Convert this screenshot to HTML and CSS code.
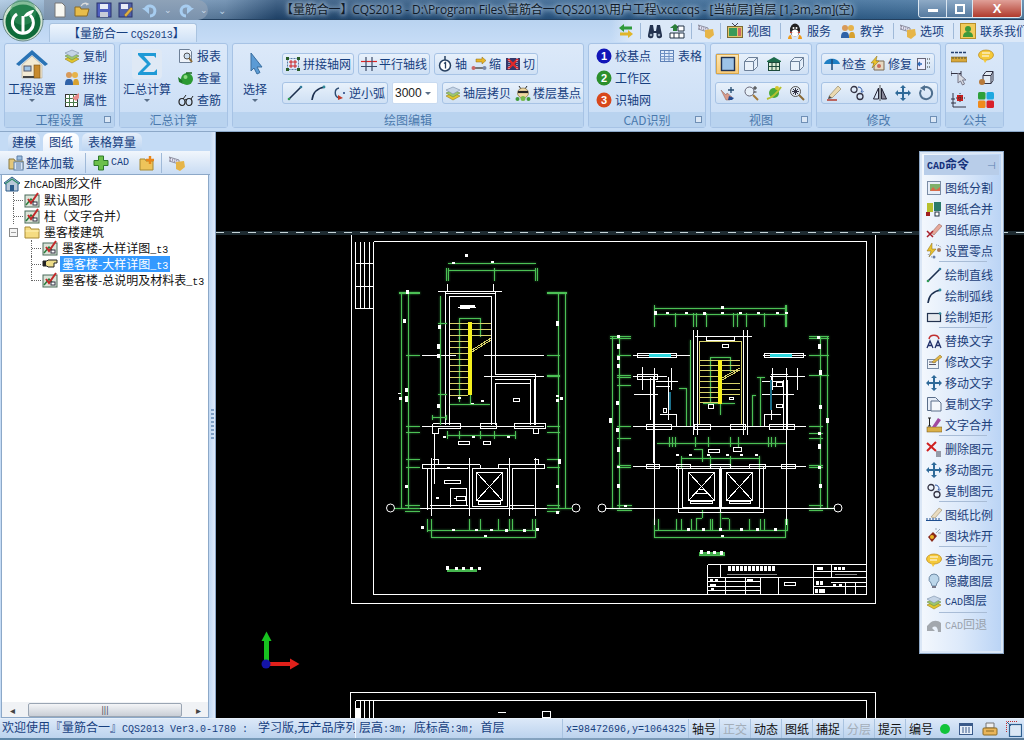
FILE: index.html
```html
<!DOCTYPE html>
<html lang="zh-CN">
<head>
    <meta charset="UTF-8">
    <title>量筋合一 CQS2013</title>
    <link rel="stylesheet" href="styles.css">
</head>
<body>
<svg class="defs" xmlns="http://www.w3.org/2000/svg">
    <symbol id="layers" viewBox="0 0 16 16"><path d="M1 11l7-3 7 3-7 4z" fill="#e3c62e" stroke="#97801a" stroke-width=".6"/><path d="M1 8l7-3 7 3-7 4z" fill="#9fc76a" stroke="#6b8a45" stroke-width=".6"/><path d="M1 5l7-3 7 3-7 4z" fill="#c5d4e6" stroke="#7a8ea8" stroke-width=".6"/></symbol>
    <symbol id="people" viewBox="0 0 16 16"><circle cx="5" cy="5" r="3" fill="#d89a5a"/><circle cx="11" cy="5" r="3" fill="#e6b34a"/><path d="M9 15c0-5 1-6 3-6s3 1 3 6z" fill="#d7a12f"/><path d="M1 15c0-5 1-6 4-6s4 1 4 6z" fill="#2f62a8"/></symbol>
    <symbol id="props" viewBox="0 0 16 16"><rect x="1.500" y="2.500" width="12" height="12" fill="#fff" stroke="#333"/><path d="M1 6.500h13M1 10.500h13M5.500 2v13M9.500 2v13" stroke="#4a7a4a"/><path d="M8 6l7-5 0 5-3 3z" fill="#e88a8a"/></symbol>
    <symbol id="report" viewBox="0 0 16 16"><path d="M1.500 1.500h10l2 2v11h-12z" fill="#eef3fa" stroke="#6d7f96"/><circle cx="9" cy="8" r="3" fill="#cfe0f0" stroke="#555"/><path d="M11 10l3 4" stroke="#8a6a35" stroke-width="2"/></symbol>
    <symbol id="teapot" viewBox="0 0 16 16"><circle cx="9" cy="9" r="6" fill="#2c9a33"/><circle cx="7.500" cy="7" r="2" fill="#8edb83"/><path d="M4 10L0 7l1 5 4 2z" fill="#1c7a26"/><path d="M8 3h6" stroke="#1c6a22" stroke-width="1.500"/></symbol>
    <symbol id="glasses" viewBox="0 0 16 16"><ellipse cx="4" cy="10" rx="3" ry="3.500" fill="none" stroke="#222" stroke-width="1.200"/><ellipse cx="11" cy="10" rx="3" ry="3.500" fill="none" stroke="#222" stroke-width="1.200"/><path d="M7 8c1-1 1-1 1.500 0M13 7l2-3M5 7l3-4" stroke="#222" fill="none"/></symbol>
    <symbol id="net" viewBox="0 0 16 16"><rect x="2.500" y="2.500" width="11" height="11" fill="none" stroke="#5a7fa8" stroke-dasharray="2 1"/><path d="M6 4v8M10 4v8M4 6h8M4 10h8" stroke="#c22" stroke-width="1"/><path d="M1 1h3v3H1zM12 1h3v3h-3zM1 12h3v3H1zM12 12h3v3h-3z" fill="#2a5d2a"/></symbol>
    <symbol id="parallel" viewBox="0 0 16 16"><path d="M0 5.500h16" stroke="#d22" stroke-width="1.200"/><path d="M0 10.500h16M5 1v14M11 1v14" stroke="#3a4a66" stroke-width="1.200"/></symbol>
    <symbol id="axis1" viewBox="0 0 16 16"><circle cx="8" cy="9.500" r="5.500" fill="#fff" stroke="#274060" stroke-width="1.500"/><path d="M8 0v4" stroke="#274060" stroke-width="1.500"/><path d="M7 7.500l1.500-1v6" stroke="#274060" fill="none" stroke-width="1.300"/></symbol>
    <symbol id="shrink" viewBox="0 0 16 16"><path d="M5 3h6V1l4 3.500L11 8V6H5z" fill="#e9b526" stroke="#8a6a15" stroke-width=".5"/><path d="M2 12h12" stroke="#777" stroke-width="2"/><circle cx="2.500" cy="12" r="2" fill="#c66"/><circle cx="13.500" cy="12" r="2" fill="#78a"/></symbol>
    <symbol id="cut" viewBox="0 0 16 16"><rect x="1" y="2" width="14" height="12" fill="#33396b"/><path d="M3 3l10 10M13 3L3 13" stroke="#e02828" stroke-width="2.400"/><path d="M4 2v12M12 2v12" stroke="#dfe6f2" stroke-dasharray="1 1"/></symbol>
    <symbol id="line" viewBox="0 0 16 16"><path d="M2 14L14 2" stroke="#1c2f4f" stroke-width="1.600"/><circle cx="2" cy="14" r="1.300" fill="#2f9a55"/><circle cx="14" cy="2" r="1.300" fill="#2f7a9a"/></symbol>
    <symbol id="arc" viewBox="0 0 16 16"><path d="M2 15C3 7 7 3 15 2" fill="none" stroke="#1c2f4f" stroke-width="1.600"/><circle cx="14" cy="2" r="1.400" fill="#2f8a9a"/></symbol>
    <symbol id="arc2" viewBox="0 0 16 16"><path d="M8 3C3 4 3 11 8 13" fill="none" stroke="#2d4a70" stroke-width="1.400"/><path d="M7 10l5 3-5 2z" fill="#c03a2a"/><circle cx="13" cy="8" r="1" fill="#1f3f7f"/></symbol>
    <symbol id="face" viewBox="0 0 16 16"><path d="M4 1l2 3M12 1l-2 3" stroke="#222"/><ellipse cx="8" cy="8" rx="5.500" ry="5" fill="#f0d8a0" stroke="#6b5a35" stroke-width=".6"/><path d="M3 7h10" stroke="#222" stroke-width="2.200"/><circle cx="2.500" cy="14" r="2" fill="#3f9a3a"/><circle cx="13.500" cy="14" r="2" fill="#3f9a3a"/><circle cx="8" cy="13.500" r="2.500" fill="#77b94d"/></symbol>
    <symbol id="table" viewBox="0 0 16 16"><rect x="1.500" y="2.500" width="13" height="11" fill="#dfeafa" stroke="#5d80b5"/><path d="M1 5.500h14M1 8.500h14M1 11h14M5.500 3v10M10 3v10" stroke="#6e90c4"/></symbol>
    <symbol id="view-flat" viewBox="0 0 16 16"><rect x="1.500" y="1.500" width="13" height="13" fill="#9dc3e6" stroke="#1f3050" stroke-width="1.400"/></symbol>
    <symbol id="view-box" viewBox="0 0 16 16"><path d="M1.500 5.500h9v9h-9zM1.500 5.500l4-4h9l-4 4M10.500 14.500l4-4v-9" fill="#e9f1fa" stroke="#6d8098"/></symbol>
    <symbol id="view-plan" viewBox="0 0 16 16"><path d="M1 5l7-4 7 4v1H1z" fill="#1d6a4a"/><rect x="2.500" y="6.500" width="11" height="8" fill="#dcecd4" stroke="#1d4a3a"/><path d="M6 7v7M10 7v7M3 10.500h10" stroke="#1d4a3a"/></symbol>
    <symbol id="hand" viewBox="0 0 16 16"><path d="M1 5l5 5 1-2 5 4-2 3H6z" fill="#d99a8a" stroke="#8a5f55" stroke-width=".5"/><path d="M9 11l5 2-2 2H8z" fill="#244a8f"/><path d="M11 2v6M8 5h6" stroke="#244a6f" stroke-width="1.300"/></symbol>
    <symbol id="zoom" viewBox="0 0 16 16"><circle cx="6.500" cy="6.500" r="4.500" fill="#e7f0f8" stroke="#667"/><path d="M10 10l5 5" stroke="#a37a3a" stroke-width="2"/><path d="M12 1v4M10 3h4M10.500 7h3" stroke="#333"/></symbol>
    <symbol id="planet" viewBox="0 0 16 16"><circle cx="8" cy="8" r="5" fill="#4aa83a"/><path d="M1 14C5 13 11 8 15 2" stroke="#b7c02e" stroke-width="2" fill="none"/><circle cx="11" cy="3" r="2" fill="#d8c52e"/></symbol>
    <symbol id="zoomx" viewBox="0 0 16 16"><circle cx="6.500" cy="6.500" r="5" fill="#dfe8f2" stroke="#555"/><path d="M4 4l5 5M9 4L4 9M6.500 3v7M3 6.500h7" stroke="#334"/><path d="M10 10l5 5" stroke="#8a6a35" stroke-width="2"/></symbol>
    <symbol id="umbrella" viewBox="0 0 16 16"><path d="M0 8C2 1 14 1 16 8z" fill="#1f7fc4"/><path d="M8 3v11" stroke="#1a4a7a" stroke-width="1.500"/></symbol>
    <symbol id="bolt" viewBox="0 0 16 16"><path d="M4 5h10v9H4z" fill="#e6d8c0" stroke="#7a6a55"/><circle cx="9" cy="10" r="2" fill="#c96a5a"/><path d="M7 0L1 7h3l-2 5 7-7H6z" fill="#e9c22e" stroke="#8a6a15" stroke-width=".5"/></symbol>
    <symbol id="listicon" viewBox="0 0 16 16"><rect x="1.500" y="2.500" width="8" height="11" fill="#eef" stroke="#667"/><path d="M6 8H2M4 6L2 8l2 2" stroke="#2a66b5" fill="none" stroke-width="1.300"/><path d="M11 3h4M11 7h4M11 11h4" stroke="#333" stroke-dasharray="1 1"/></symbol>
    <symbol id="pencil" viewBox="0 0 16 16"><path d="M3 11L12 1l3 3-9 9z" fill="#e9d9b0" stroke="#8a7a55" stroke-width=".6"/><path d="M3 11l3 2-4 1z" fill="#444"/><path d="M1 15h10" stroke="#b03020" stroke-width="1.400"/></symbol>
    <symbol id="chain" viewBox="0 0 16 16"><circle cx="5" cy="4.500" r="3" fill="none" stroke="#334" stroke-width="1.300"/><circle cx="11" cy="11.500" r="3" fill="none" stroke="#334" stroke-width="1.300"/><path d="M9 2c3 0 4 2 4 4M12 6l1 1.500L14.500 6" stroke="#2a55a5" fill="none"/></symbol>
    <symbol id="mirror" viewBox="0 0 16 16"><path d="M8 0v16" stroke="#555"/><path d="M6.500 3L1.500 14h5z" fill="none" stroke="#223"/><path d="M9.500 3l5 11h-5z" fill="#889" stroke="#223"/></symbol>
    <symbol id="move" viewBox="0 0 16 16"><path d="M8 0l3 3H9v4h4V5l3 3-3 3V9H9v4h2l-3 3-3-3h2V9H3v2L0 8l3-3v2h4V3H5z" fill="#2f6a99"/></symbol>
    <symbol id="rotate" viewBox="0 0 16 16"><path d="M5 3a6 6 0 1 1-2 2" fill="none" stroke="#50708f" stroke-width="2"/><path d="M7 0L2 3l5 3z" fill="#50708f"/></symbol>
    <symbol id="ruler" viewBox="0 0 16 16"><rect x="0" y="9" width="16" height="5" fill="#d9a83a" stroke="#6b5215" stroke-width=".5"/><path d="M2 9v2M5 9v2M8 9v2M11 9v2M14 9v2" stroke="#553"/><path d="M0 4.500h16" stroke="#25406f" stroke-width="1.600" stroke-dasharray="3 1"/></symbol>
    <symbol id="bubble" viewBox="0 0 16 16"><ellipse cx="8" cy="7" rx="7.500" ry="5" fill="#f5c93a" stroke="#b8861a" stroke-width=".7"/><path d="M5 11l2 4 2-3z" fill="#f5c93a"/><path d="M4 5h8M4 8h7" stroke="#fff" stroke-width="1.200"/></symbol>
    <symbol id="pick" viewBox="0 0 16 16"><path d="M0 3.500h10M0 1v5M10 1v5" stroke="#334"/><path d="M7 3l0 10 2.500-2 2 4 2-1-2-4H15z" fill="#d8dce4" stroke="#778"/></symbol>
    <symbol id="cube" viewBox="0 0 16 16"><path d="M5 5.500h8v8H5zM5 5.500l3-4h7l-2 4M13 13.500l2-3v-9" fill="#e2eaf4" stroke="#334"/><circle cx="4" cy="12" r="3" fill="#b87a3a"/></symbol>
    <symbol id="target" viewBox="0 0 16 16"><path d="M2 1v14h13" fill="none" stroke="#334"/><path d="M0 11h5M0 7h4" stroke="#334"/><rect x="6" y="3" width="6" height="6" fill="#cc2020"/><path d="M9 1v10M5 6h9" stroke="#333" stroke-dasharray="1 1"/></symbol>
    <symbol id="colors" viewBox="0 0 16 16"><rect x="0" y="0" width="7.500" height="7.500" rx="1.500" fill="#2da03a"/><rect x="8.500" y="0" width="7.500" height="7.500" rx="1.500" fill="#1fa8e0"/><rect x="0" y="8.500" width="7.500" height="7.500" rx="1.500" fill="#f08a1c"/><rect x="8.500" y="8.500" width="7.500" height="7.500" rx="1.500" fill="#d8202a"/></symbol>
    <symbol id="swap" viewBox="0 0 16 16"><path d="M1 5l5-4v2.500h8v3H6V9z" fill="#2f9a3a"/><path d="M15 11l-5 4v-2.500H2v-3h8V7z" fill="#e0b528"/></symbol>
    <symbol id="binoc" viewBox="0 0 16 16"><path d="M3 2h3l1 6h2l1-6h3l2 10a2.500 2.500 0 0 1-5.500 1V10h-3v3A2.500 2.500 0 0 1 1 12z" fill="#23324f"/><circle cx="4" cy="12" r="1.300" fill="#9ab"/><circle cx="12" cy="12" r="1.300" fill="#9ab"/></symbol>
    <symbol id="find" viewBox="0 0 16 16"><path d="M6 1L1 5h3v3h4V5h3z" fill="#2c7f3a"/><path d="M9 3h6v5H9zM1 10h14v5H1z" fill="#fff" stroke="#234"/><path d="M5 10v5M10 10v5" stroke="#234"/></symbol>
    <symbol id="keyboard" viewBox="0 0 16 16"><path d="M0 2l10 3v4L0 6z" fill="#eef" stroke="#667" stroke-width=".7"/><path d="M1 3.500l8 2.500M1 5l8 2.500" stroke="#778" stroke-dasharray="1 1"/><path d="M7 7l8-1 1 6-5 4-4-2z" fill="#e6b548"/></symbol>
    <symbol id="tv" viewBox="0 0 16 16"><path d="M5 0l3 3 3-3" stroke="#445" fill="none"/><rect x="0.500" y="3.500" width="15" height="11" fill="#e2c56a" stroke="#7a6a35"/><rect x="2" y="5" width="8" height="8" fill="#3a9a5a"/><rect x="11" y="5" width="3" height="8" fill="#c66"/></symbol>
    <symbol id="qq" viewBox="0 0 16 16"><ellipse cx="8" cy="7" rx="5" ry="6.500" fill="#222"/><ellipse cx="8" cy="10" rx="3.500" ry="3.500" fill="#fff"/><path d="M3 8.500c3 2 7 2 10 0v1.500H3z" fill="#d8301c"/><path d="M1 16c0-2 1-4 3-4l1 4zM15 16c0-2-1-4-3-4l-1 4z" fill="#ef9a1a"/><circle cx="6.500" cy="5" r="1" fill="#fff"/><circle cx="9.500" cy="5" r="1" fill="#fff"/></symbol>
    <symbol id="contact" viewBox="0 0 16 16"><rect x="0.500" y="0.500" width="15" height="15" fill="#f2cb5a" stroke="#b8902a"/><circle cx="8" cy="6" r="3" fill="#3f9a3a"/><path d="M3 14c0-4 2-5 5-5s5 1 5 5z" fill="#3f9a3a"/></symbol>
    <symbol id="map" viewBox="0 0 16 16"><rect x="1.500" y="1.500" width="13" height="13" fill="#e7eef8" stroke="#7a8ca5"/><rect x="4" y="4" width="10" height="7" fill="#7fb06a"/><path d="M4 11l3-4 3 3 4-3v4z" fill="#d86a4a"/></symbol>
    <symbol id="merge" viewBox="0 0 16 16"><rect x="8" y="1" width="7" height="9" fill="#2a7a6a"/><path d="M1 2h6v9H1z" fill="#b7c02e"/><rect x="0" y="11" width="4" height="4" fill="#a02020"/><rect x="9" y="11" width="4" height="4" fill="#fff" stroke="#234"/></symbol>
    <symbol id="origin" viewBox="0 0 16 16"><path d="M5 11L13 2l3 2-8 9z" fill="#e6a89a" stroke="#8a5a50" stroke-width=".5"/><path d="M1 9l6 6M7 9l-6 6" stroke="#a8202a" stroke-width="1.500"/></symbol>
    <symbol id="zero" viewBox="0 0 16 16"><path d="M6 0L1 8h4l-2 6 7-8H6z" fill="#e9c22e" stroke="#8a6a15" stroke-width=".5"/><circle cx="13" cy="7" r="2" fill="#a87a5a"/><circle cx="8" cy="14" r="1.500" fill="#6a7fa8"/><path d="M10 2c3 0 5 2 5 3M2 11c1 2 3 3 4 3" stroke="#7a8ca5" fill="none" stroke-dasharray="1 1"/></symbol>
    <symbol id="rectdraw" viewBox="0 0 16 16"><rect x="1.500" y="4.500" width="13" height="8" fill="#e6e9ee" stroke="#23324f" stroke-width="1.200"/><circle cx="14" cy="4.500" r="1.300" fill="#2f8a9a"/></symbol>
    <symbol id="replace" viewBox="0 0 16 16"><path d="M3 6C4 1 12 1 13 6" fill="none" stroke="#c03030" stroke-width="1.500"/><path d="M1 15L4 8l3 7M9 15l3-7 3 7M2 12.500h4M10 12.500h4" fill="none" stroke="#20306a" stroke-width="1.300"/></symbol>
    <symbol id="edittext" viewBox="0 0 16 16"><rect x="1.500" y="5.500" width="11" height="9" fill="#eef3f8" stroke="#7a8ca5"/><path d="M3 8h7M3 10.500h7" stroke="#556"/><path d="M6 8l8-7 2 2-8 6z" fill="#e0b548" stroke="#8a6a15" stroke-width=".5"/></symbol>
    <symbol id="copydoc" viewBox="0 0 16 16"><path d="M1.500 1.500h8l3 3v10h-11z" fill="#e7eef8" stroke="#5a6e8a"/><path d="M5 5h8l2 2v8H5z" fill="#f4f8fc" stroke="#5a6e8a"/></symbol>
    <symbol id="textmerge" viewBox="0 0 16 16"><rect x="1" y="10" width="15" height="5" fill="#dbb048" stroke="#6b5215" stroke-width=".5"/><path d="M2 1h3M2 9h3M3.500 1v8" stroke="#222"/><path d="M6 10l6-9 3 2-5 7z" fill="#a04aa0"/></symbol>
    <symbol id="delete" viewBox="0 0 16 16"><path d="M1 10l9-9M1 2l9 8" stroke="#d02020" stroke-width="2"/><path d="M10 11h5M10 13h5M10 15h5" stroke="#445"/></symbol>
    <symbol id="scale" viewBox="0 0 16 16"><path d="M0 13.500h16M1 11v3M4 11v3M7 11v3M10 11v3M13 11v3" stroke="#1f4f8f"/><path d="M5 10L13 1l3 2-7 8z" fill="#eadcc0" stroke="#8a7a55" stroke-width=".5"/></symbol>
    <symbol id="explode" viewBox="0 0 16 16"><path d="M2 9l5-5 4 4-5 6z" fill="#8a2a1a"/><circle cx="6" cy="9" r="2" fill="#e9b526"/><path d="M10 5l4-4M12 5h3M10 2V0" stroke="#9ab" stroke-width="1"/></symbol>
    <symbol id="bulb" viewBox="0 0 16 16"><path d="M8 1a5 5 0 0 1 3 9l-1 3H6l-1-3A5 5 0 0 1 8 1z" fill="#bcd6ea" stroke="#6f8aa5"/><rect x="6" y="13" width="4" height="2" fill="#778"/></symbol>
    <symbol id="undo" viewBox="0 0 16 16"><path d="M1 8l3-3c3-3 8-3 11 0v9h-3c0-5-3-7-6-4l3 3H1z" fill="#a3a8ae"/></symbol>
    <symbol id="pointer" viewBox="0 0 16 16"><path d="M1 5h4l1-1h9v3h-3v4H6L5 10H1z" fill="#eedd88" stroke="#222"/><rect x="1" y="5" width="3" height="5" fill="#222"/></symbol>
    <symbol id="sheet" viewBox="0 0 16 16"><rect x="1" y="3" width="14" height="12" fill="#dbe4d8" stroke="#4a6a5a"/><path d="M2 13L7 7l3 3" stroke="#2a7a3a" fill="none" stroke-width="1.500"/><path d="M4 7l3 4 7-10" stroke="#c22a2a" fill="none" stroke-width="2"/><rect x="9" y="10" width="4" height="3" fill="#fff" stroke="#334"/></symbol>
    <symbol id="folder" viewBox="0 0 16 16"><path d="M1 3h5l1 2h8v9H1z" fill="#f5dc82" stroke="#a88a35"/><path d="M1.500 7h13.500" stroke="#fff3b8"/></symbol>
    <symbol id="folderadd" viewBox="0 0 16 16"><path d="M1 4h5l1 2h7v9H1z" fill="#eec45a" stroke="#a88a35"/><path d="M11 1v8M7 5h8" stroke="#e8861a" stroke-width="2.400"/></symbol>
    <symbol id="plus" viewBox="0 0 16 16"><path d="M5.500 1h5v4.500H15v5h-4.500V15h-5v-4.500H1v-5h4.500z" fill="#6cc04a" stroke="#2e7a2a"/></symbol>
    <symbol id="loadall" viewBox="0 0 16 16"><path d="M1 4h5l1 2h8v8H1z" fill="#e4c77a" stroke="#8a7a45"/><rect x="6" y="7" width="9" height="8" fill="#d9e5f4" stroke="#5d7fa8"/><path d="M8 9h5M8 11h5M8 13h5" stroke="#5d7fa8"/><path d="M9 1h5v4H9z" fill="#9cbfe0" stroke="#5d7fa8"/></symbol>
    <symbol id="home3d" viewBox="0 0 16 16"><path d="M8 1L0 7l2 1v7h12V8l2-1z" fill="#b9c8d8" stroke="#2a5a8a"/><rect x="6" y="9" width="4" height="6" fill="#2a5a8a"/><path d="M1 8l7-5 7 5" fill="none" stroke="#2f8a6a" stroke-width="1.300"/></symbol>
</svg>

<div class="app">
    <header class="titlebar">
        <div class="qat">
            <svg class="ic qat-new" viewBox="0 0 16 16"><path d="M3 1h7l3 3v11H3z" fill="#f8f8f2" stroke="#777"/></svg>
            <svg class="ic" viewBox="0 0 16 16"><path d="M1 5h5l1 2h8l-2 7H1z" fill="#e8bd4a" stroke="#8a6a25"/><path d="M7 4c2-3 5-3 7-2l-2 1" stroke="#ddd" fill="none" stroke-width="1.300"/></svg>
            <svg class="ic" viewBox="0 0 16 16"><rect x="1" y="1" width="14" height="14" fill="#5060c0" stroke="#28306a"/><rect x="4" y="2" width="8" height="5" fill="#e8ecf8"/><rect x="4" y="10" width="8" height="5" fill="#c8ccd8"/></svg>
            <svg class="ic" viewBox="0 0 16 16"><rect x="1" y="1" width="13" height="14" fill="#5060a8" stroke="#28306a"/><rect x="3" y="2" width="7" height="5" fill="#e8ecf8"/><path d="M6 13l7-8 2 2-7 8z" fill="#e0b040" stroke="#654" stroke-width=".5"/></svg>
            <svg class="ic qat-undo" viewBox="0 0 16 16"><path d="M3 8a5 5 0 1 1 5 6" fill="none" stroke="#a7cdf0" stroke-width="3"/><path d="M0 6h7v6z" fill="#a7cdf0"/></svg>
            <span class="qat-arrow">⌄</span>
            <svg class="ic" viewBox="0 0 16 16"><path d="M13 8a5 5 0 1 0-5 6" fill="none" stroke="#a7cdf0" stroke-width="3"/><path d="M16 6H9v6z" fill="#a7cdf0"/></svg>
            <span class="qat-arrow">⌄</span>
        </div>
        <span class="qat-more">⌄</span>
        <div class="title-text">【量筋合一】CQS2013 - D:\Program Files\量筋合一CQS2013\用户工程\xcc.cqs - [当前层]首层 [1,3m,3m](空)</div>
        <div class="win-btns">
            <div class="win-btn win-min"><i class="min-bar"></i></div>
            <div class="win-btn win-max"><i class="max-box"></i></div>
            <div class="win-btn win-close">X</div>
        </div>
    </header>
    <div class="logo">
        <svg viewBox="0 0 42 42" width="42" height="42">
            <circle cx="21" cy="21" r="20" fill="#cfe2d0" stroke="#6a8a8a"/>
            <circle cx="21" cy="22" r="17.500" fill="#0f6b3a"/>
            <circle cx="21" cy="12" r="13" fill="#3b9a63" opacity=".5"/>
            <path d="M15 14a10.500 10.500 0 1 0 13 1" fill="none" stroke="#fff" stroke-width="3"/>
            <path d="M21 33V16" stroke="#fff" stroke-width="3"/>
            <path d="M21 17c3-5 7-7 11-7-1 4-6 7-11 7z" fill="#fff"/>
        </svg>
    </div>

    <div class="tabrow">
        <div class="ribbon-tab">【量筋合一 <span class="m">CQS2013</span>】</div>
        <div class="quick">
            <svg class="ic"><use href="#swap"/></svg>
            <i class="vsep"></i>
            <svg class="ic"><use href="#binoc"/></svg>
            <svg class="ic"><use href="#find"/></svg>
            <i class="vsep"></i>
            <svg class="ic"><use href="#keyboard"/></svg>
            <i class="vsep"></i>
            <span class="quick-item"><svg class="ic"><use href="#tv"/></svg>视图</span>
            <i class="vsep far"></i>
            <span class="quick-item"><svg class="ic"><use href="#qq"/></svg>服务</span>
            <span class="quick-item wide"><svg class="ic"><use href="#people"/></svg>教学</span>
            <i class="vsep far"></i>
            <span class="quick-item"><svg class="ic"><use href="#keyboard"/></svg>选项</span>
            <i class="vsep far"></i>
            <span class="quick-item"><svg class="ic"><use href="#contact"/></svg>联系我们</span>
        </div>
    </div>

    <section class="ribbon">
        <div class="group g1">
            <div class="group-body">
                <div class="big">
                    <svg class="ic-big" viewBox="0 0 32 32"><path d="M16 2L0 16l3 2L16 7l13 11 3-2z" fill="#2a73b5"/><path d="M6 17l10-9 10 9v13H6z" fill="#f3ead4" stroke="#b8a98a" stroke-width=".6"/><rect x="8" y="18" width="7" height="5" fill="#9dc3e6" stroke="#556"/><rect x="18" y="17" width="6" height="13" fill="#c78a2e" stroke="#7a5215" stroke-width=".6"/><rect x="7" y="28" width="11" height="2" fill="#444"/></svg>
                    <span>工程设置</span><i class="drop"></i>
                </div>
                <div class="small-col">
                    <div class="small"><svg class="ic"><use href="#layers"/></svg>复制</div>
                    <div class="small"><svg class="ic"><use href="#people"/></svg>拼接</div>
                    <div class="small"><svg class="ic"><use href="#props"/></svg>属性</div>
                </div>
            </div>
            <div class="group-label">工程设置<i class="launcher"></i></div>
        </div>

        <div class="group g2">
            <div class="group-body">
                <div class="big">
                    <svg class="ic-big" viewBox="0 0 32 32"><rect x="1" y="1" width="30" height="30" rx="4" fill="#dfe9f5"/><path d="M7 5h18v5l-2-2H13l7 8-8 8h11l3-3v6H7v-2l9-9-9-9z" fill="#1f9ad6"/></svg>
                    <span>汇总计算</span><i class="drop"></i>
                </div>
                <div class="small-col">
                    <div class="small"><svg class="ic"><use href="#report"/></svg>报表</div>
                    <div class="small"><svg class="ic"><use href="#teapot"/></svg>查量</div>
                    <div class="small"><svg class="ic"><use href="#glasses"/></svg>查筋</div>
                </div>
            </div>
            <div class="group-label">汇总计算</div>
        </div>

        <div class="group g3">
            <div class="group-body">
                <div class="big select">
                    <svg class="ic-big" viewBox="0 0 32 32"><path d="M12 5v18l3-3 3 6 3-1.500-3-5.500h5z" fill="#5b9bd5" stroke="#3a6f9f"/></svg>
                    <span>选择</span><i class="drop"></i>
                </div>
                <div class="rows">
                    <div class="row">
                        <div class="btns"><span class="tool"><svg class="ic"><use href="#net"/></svg>拼接轴网</span></div>
                        <div class="btns"><span class="tool"><svg class="ic"><use href="#parallel"/></svg>平行轴线</span></div>
                        <div class="btns"><span class="tool"><svg class="ic"><use href="#axis1"/></svg>轴</span><span class="tool"><svg class="ic"><use href="#shrink"/></svg>缩</span><span class="tool"><svg class="ic"><use href="#cut"/></svg>切</span></div>
                    </div>
                    <div class="row">
                        <div class="btns"><span class="tool icon-only"><svg class="ic"><use href="#line"/></svg></span><span class="tool icon-only"><svg class="ic"><use href="#arc"/></svg></span><span class="tool"><svg class="ic"><use href="#arc2"/></svg>逆小弧</span></div>
                        <div class="combo"><span>3000</span><i class="drop"></i></div>
                        <div class="btns"><span class="tool"><svg class="ic"><use href="#layers"/></svg>轴层拷贝</span><span class="tool"><svg class="ic"><use href="#face"/></svg>楼层基点</span></div>
                    </div>
                </div>
            </div>
            <div class="group-label">绘图编辑</div>
        </div>

        <div class="group g4">
            <div class="group-body">
                <div class="small-col">
                    <div class="small"><svg class="ic" viewBox="0 0 16 16"><circle cx="8" cy="8" r="7.500" fill="#1216b8"/><text x="8" y="12" class="num">1</text></svg>校基点</div>
                    <div class="small"><svg class="ic" viewBox="0 0 16 16"><circle cx="8" cy="8" r="7.500" fill="#2c8f2c"/><text x="8" y="12" class="num">2</text></svg>工作区</div>
                    <div class="small"><svg class="ic" viewBox="0 0 16 16"><circle cx="8" cy="8" r="7.500" fill="#d8481c"/><text x="8" y="12" class="num">3</text></svg>识轴网</div>
                </div>
                <div class="small-col">
                    <div class="small"><svg class="ic"><use href="#table"/></svg>表格</div>
                </div>
            </div>
            <div class="group-label">CAD识别<i class="launcher"></i></div>
        </div>

        <div class="group g5">
            <div class="group-body">
                <div class="rows">
                    <div class="row">
                        <div class="btns">
                            <span class="tool square active"><svg class="ic"><use href="#view-flat"/></svg></span>
                            <span class="tool square"><svg class="ic"><use href="#view-box"/></svg></span>
                            <span class="tool square"><svg class="ic"><use href="#view-plan"/></svg></span>
                            <span class="tool square"><svg class="ic"><use href="#view-box"/></svg></span>
                        </div>
                    </div>
                    <div class="row">
                        <div class="btns">
                            <span class="tool square"><svg class="ic"><use href="#hand"/></svg></span>
                            <span class="tool square"><svg class="ic"><use href="#zoom"/></svg></span>
                            <span class="tool square"><svg class="ic"><use href="#planet"/></svg></span>
                            <span class="tool square"><svg class="ic"><use href="#zoomx"/></svg></span>
                        </div>
                    </div>
                </div>
            </div>
            <div class="group-label">视图<i class="launcher"></i></div>
        </div>

        <div class="group g6">
            <div class="group-body">
                <div class="rows">
                    <div class="row">
                        <div class="btns">
                            <span class="tool"><svg class="ic"><use href="#umbrella"/></svg>检查</span>
                            <span class="tool"><svg class="ic"><use href="#bolt"/></svg>修复</span>
                            <span class="tool"><svg class="ic"><use href="#listicon"/></svg></span>
                        </div>
                    </div>
                    <div class="row">
                        <div class="btns">
                            <span class="tool square"><svg class="ic"><use href="#pencil"/></svg></span>
                            <span class="tool square"><svg class="ic"><use href="#chain"/></svg></span>
                            <span class="tool square"><svg class="ic"><use href="#mirror"/></svg></span>
                            <span class="tool square"><svg class="ic"><use href="#move"/></svg></span>
                            <span class="tool square"><svg class="ic"><use href="#rotate"/></svg></span>
                        </div>
                    </div>
                </div>
            </div>
            <div class="group-label">修改<i class="launcher"></i></div>
        </div>

        <div class="group g7">
            <div class="group-body">
                <div class="icon-grid">
                    <svg class="ic"><use href="#ruler"/></svg>
                    <svg class="ic"><use href="#bubble"/></svg>
                    <svg class="ic"><use href="#pick"/></svg>
                    <svg class="ic"><use href="#cube"/></svg>
                    <svg class="ic"><use href="#target"/></svg>
                    <svg class="ic"><use href="#colors"/></svg>
                </div>
            </div>
            <div class="group-label">公共</div>
        </div>
    </section>

    <main class="main">
        <aside class="side">
            <div class="side-tabs">
                <span class="side-tab">建模</span>
                <span class="side-tab on">图纸</span>
                <span class="side-tab">表格算量</span>
            </div>
            <div class="side-tools">
                <span class="side-tool"><svg class="ic"><use href="#loadall"/></svg>整体加载</span>
                <i class="vsep"></i>
                <span class="side-tool"><svg class="ic"><use href="#plus"/></svg><span class="m">CAD</span></span>
                <span class="side-tool spaced"><svg class="ic"><use href="#folderadd"/></svg></span>
                <i class="vsep close"></i>
                <span class="side-tool"><svg class="ic"><use href="#keyboard"/></svg></span>
            </div>
            <div class="tree">
                <div class="tree-list">
                    <div class="node root"><svg class="ic"><use href="#home3d"/></svg><span class="root-label"><span class="m">ZhCAD</span>图形文件</span></div>
                    <div class="node lv1"><i class="branch"></i><svg class="ic"><use href="#sheet"/></svg><span class="label">默认图形</span></div>
                    <div class="node lv1"><i class="branch"></i><svg class="ic"><use href="#sheet"/></svg><span class="label">柱（文字合并）</span></div>
                    <div class="node lv1"><i class="minus"></i><svg class="ic"><use href="#folder"/></svg><span class="label">墨客楼建筑</span></div>
                    <div class="node lv2"><i class="branch"></i><svg class="ic"><use href="#sheet"/></svg><span class="label">墨客楼-大样详图<span class="m">_t3</span></span></div>
                    <div class="node lv2"><i class="branch"></i><svg class="ic"><use href="#pointer"/></svg><span class="label selected">墨客楼-大样详图<span class="m">_t3</span></span></div>
                    <div class="node lv2"><i class="branch last"></i><svg class="ic"><use href="#sheet"/></svg><span class="label">墨客楼-总说明及材料表<span class="m">_t3</span></span></div>
                </div>
                <div class="hscroll">
                    <span class="sb-arrow">◂</span>
                    <div class="sb-thumb">|||</div>
                    <span class="sb-arrow">▸</span>
                </div>
            </div>
        </aside>
        <div class="splitter"><i class="grip"></i></div>

        <div class="canvas">
            <svg class="drawing" viewBox="216 132 808 586" shape-rendering="crispEdges">
                <!-- 参考线 -->
                <rect x="216" y="231" width="808" height="4" fill="#1d2a30"/>
                <path class="dash" d="M216 232.500H1024"/>

                <!-- 图框 -->
                <path class="w" d="M351.500 235V603.500H875.500V235M373.500 241.500H866.500V594.500H373.500V241.500M355.500 241.500V308.500H373M360.500 241.500V308.500M364.500 241.500V308.500M369.500 241.500V308.500M355.500 263.500H373M355.500 286.500H373"/>
                <path class="w" d="M350.500 718V692.500H875.500V718M866.500 700.500V718M373.500 700.500H866.500M355.500 700.500H373.500V718M355.500 700.500V718M360.500 700.500V718M364.500 700.500V718M369.500 700.500V718M498 712.500h8M542 711.500h8v6h-8z"/>
                <rect x="355" y="708" width="5" height="10" fill="#fff"/>

                <!-- 左侧平面 -->
                <path class="w" d="M438 291.500H502M445 293.500H495M449 296.500H492M445.500 291V425M449.500 296V425M491.500 296V425M495.500 291V374M447.500 284V292M493.500 284V292"/>
                <path class="w" d="M422 355.500H456M484 355.500H544M484 376.500H544M495 374.500H535.500V425M495 379.500H531M530.500 379V425M534 379V425M496 383.500H531M495.500 383V425M513.500 398.500h6v3h-6z"/>
                <path class="w" d="M422 426.500H544M432.500 423.500H460V428.500H438.500V433H432.500V423.500M480.500 423.500H496.500V428.500H480.500zM514.500 423.500H545V428.500H514.500zM533.500 428V433H538.500V428M434.500 433V484M458.500 441.500h11v3h-11zM483.500 441.500h7v3h-7z"/>
                <path class="w" d="M422 464.500H480M498 464.500H544.500V468.500H512M422 464.500V468.500H468M432.500 459.500H438.500V464M533.500 459.500H538.500V464M480 464.500V468.500H498V464"/>
                <path class="w" d="M431.500 458V516M427.500 468V510M469.500 458V516M472.500 468V506.500H507.500V468H472.500M476.500 472.500H502.500V500.500H476.500zM476.500 472.500L502.500 500.500M502.500 472.500L476.500 500.500M478.500 501.500H500.500V504.500H478.500zM509.500 458V516M512.500 468V510M535.500 458V516"/>
                <path class="w" d="M444.500 480.500H460.500V483.500H444.500zM450.500 507V488.500H466.500V506M456.500 496.500H465.500V500.500H456.500zM394 508.500H571M430 505.500H468M510 505.500H534"/>
                <circle class="ring" cx="390.500" cy="508" r="4" shape-rendering="auto"/>
                <circle class="ring" cx="576" cy="508" r="4" shape-rendering="auto"/>
                <path class="g" d="M447.500 263.500H535.500M447.500 270.500H535.500M446.500 268V281M448.500 268V281M494.500 268V281M535.500 268V281M537.500 268V281"/>
                <path class="g" d="M401.500 292V508M408.500 292V508M558.500 292V508M565.500 292V508M399 292.500H420M399 293.500H420M547 292.500H567M547 293.500H567M406 355.500H420M547 355.500H560M547 375.500H560M547 376.500H560M406 426.500H420M547 426.500H560M406 432.500H420M547 432.500H560M406 459.500H420M547 459.500H560M406 467.500H420M547 467.500H560M395 508.500H420M405 505.500H420M547 505.500H560M547 508.500H572M405 511.500H420M547 511.500H560"/>
                <path class="g" d="M440.500 296V425M438 323.500H447M438 394.500H447M438 394.500H447M459.500 402V318.500H480.500V337M450 404.500H490M470.500 395V405M447.500 435.500H515M447.500 431V439M459 431V439M480 431V439M494 431V439M515 431V439M432 417.500H447M432 415V420M446 415V420"/>
                <path class="g" d="M428 530.500H535M431.500 537.500H535M427.500 519V532M431.500 519V538M469.500 519V530M480.500 519V530M498.500 519V530M509 519V530M512.500 519V530M532 519V530M535.500 519V538"/>
                <path class="gt" d="M447 570.500H477"/>
                <path class="y" d="M450 323.500H468M472 323.500H491M450 329.500H468M472 329.500H491M450 335.500H468M472 335.500H491M450 341.500H468M450 347.500H468M450 353.500H468M450 359.500H468M450 365.500H468M450 371.500H468M450 377.500H468M450 383.500H468M450 389.500H468M450 395.500H468M472 350L491 338M472 352L491 340"/>
                <rect x="468" y="322" width="4" height="73" fill="#f5f01e"/>
                <path class="w" d="M460 305.500H474V306H460M460 305.500h9v3h-9zM458 307.500H476M458 441.500H470"/>
                <path class="b" d="M407 290v4M453 262v2M492 261v2M404 319v4M406 388v4M406 396v6M400 397v3M399 393v1M439 325v4M438 344v5M438 354v4M438 404v4M459 397v2M482 400v2M557 321v5M557 399v3M557 395v2M561 397v3M437 497v2M448 467v2M406 485v3M557 485v3M557 511v3M559 459v5M455 498v1M472 403v1M466 254v3M444 436v2M473 436v2M508 436v2M422 526v3M453 529v2M476 529v2M491 529v2M506 529v3M524 529v3M537 528v3M485 535v2M447 566v4M456 567v3M463 567v3M471 567v3M479 567v3"/>

                <!-- 右侧平面 -->
                <path class="g" d="M654 308.500H785M654 314.500H787M654.500 305V327M786.500 305V327M675.500 313V327M693.500 313V327M696.500 313V327M706.500 313V327M733.500 313V327M737.500 313V327M746.500 313V327M764.500 313V327M785 305V327"/>
                <path class="g" d="M612.500 337V508M619.500 337V508M820.500 337V508M827.500 337V508M610 336.500H631M610 338.500H631M809 336.500H829M809 338.500H829M617 355.500H631M809 355.500H829M617 375.500H631M809 375.500H829M617 377.500H631M617 385.500H631M809 426.500H823M617 426.500H631M809 433.500H823M617 438.500H631M809 438.500H823M617 465.500H631M809 465.500H823M617 467.500H631M809 467.500H823M610 508.500H632M809 508.500H834M617 505.500H632M809 505.500H823M617 510.500H632M809 510.500H823"/>
                <path class="g" d="M690.500 340V426M710.500 403V357H730.500V372M752.500 395V426M760.500 377V426M756 395H753M679 388H686M686.500 388V426M757 377H765M703 403.500H735M720.500 403V415"/>
                <path class="g" d="M657 443.500H787M669 437V447M672 437V447M675 437V447M695 437V447M708 437V447M730 437V447M738 437V447M768 437V447M771 437V447M775 437V447M681 458.500H759M681.500 456V468M710.500 456V468M730 456V468M759.500 456V468M694 449.500H702M702.500 449V462"/>
                <path class="g" d="M654 530.500H787M654 537.500H786M654.500 519V538M658.500 519V531M676.500 519V531M681.500 519V531M691.500 519V531M696.500 519V531M710.500 519V531M712.500 519V531M729.500 519V531M749.500 519V531M760.500 519V531M764.500 519V531M785.500 519V538M787.500 519V531M696 518.500H702M702.500 510V518M720 510V530M729 518H722"/>
                <path class="gt" d="M699 553.500H725"/>
                <path class="g" d="M699 555.500H725"/>
                <path class="w" d="M633 355.500H690M763 355.500H806M637.500 353.500H676.500V357.500H637.500zM764.500 353.500H803.500V357.500H764.500zM633 376.500H667M770 376.500H805M637.500 374.500H657.500V379.500H637.500zM770.500 374.500H788M633 426.500H806M646.500 424.500H671V429.500H646.500zM694.500 424.500H710V429.500H694.500zM730.500 424.500H745V429.500H730.500zM769.500 424.500H794.500V429.500H769.500z"/>
                <path class="w" d="M633 466.500H806M646.500 464.500H659V468.500H646.500zM676.500 464.500H690V468.500H676.500zM710.500 464.500H730V468.500H710.500zM749.500 464.500H765V468.500H749.500zM781.500 464.500H795V468.500H781.500zM605 508.500H835"/>
                <path class="w" d="M654.500 368V525M786.500 368V525M693.500 330V435M697.500 330V435M743.500 330V435M747.500 330V435M695 336.500H752M706.500 336.500H734.500V340.500H706.500zM642.500 367V390M671 368V390M772 368V390M797 368V390M668.500 377V420M771.500 377V420M650.500 378V420M783.500 380V430M787.500 380V430M656 381.500H678M762 381.500H784M656 386.500H670M772 386.500H784M660 414.500H676M676.500 414V427M764 414.500H781M764.500 414V427M634 394.500H658M762 394.500H794"/>
                <rect x="653" y="377" width="2" height="86" fill="#fff"/>
                <path class="w" d="M678.500 466V512H763.500V466M682.500 468.500H719.500V507.500H682.500zM721.500 468.500H759.500V507.500H721.500zM688.500 472.500H714.500V500.500H688.500zM726.500 472.500H752.500V500.500H726.500zM688.500 472.500L714.500 500.500M714.500 472.500L688.500 500.500M726.500 472.500L752.500 500.500M752.500 472.500L726.500 500.500M690.500 501.500H712.500V503.500H690.500zM729.500 501.500H750.500V503.500H729.500zM696 493L698.500 489H704L707 493zM720.500 466V512M654.500 520V500M708.500 449.500H719.500V452H708.500zM733.500 447.500H741.500V451H733.500zM663.500 408.500H666V412H663.500zM776.500 382.500H782V386H776.500zM776.500 404.500H782V407H776.500zM722.500 344.500H728.500V347H722.500zM729.500 397.500H733V399.500H729.500zM708.500 404.500H713V408H708.500z"/>
                <path class="c" d="M649 355.500H671M770 355.500H792"/>
                <path class="cd" d="M669.500 392V410M770.500 380V410"/>
                <path class="y" d="M699.500 341.500H741.500M699.500 341V424M741.500 341V424M700 360.500H718M722 360.500H740M700 365.500H718M722 365.500H740M700 370.500H718M722 370.500H740M700 376.500H718M700 381.500H718M722 383.500H740M700 387.500H718M722 389.500H740M700 392.500H718M722 394.500H740M700 397.500H718M700 402.500H718M722 378L740 368M722 380L740 370"/>
                <rect x="718" y="360" width="4" height="44" fill="#f5f01e"/>
                <circle class="ring" cx="602" cy="508" r="4" shape-rendering="auto"/>
                <circle class="ring" cx="838" cy="508" r="4" shape-rendering="auto"/>
                <path class="b" d="M655 311v4M667 312v2M686 312v2M704 312v3M722 312v2M740 312v2M758 312v2M777 312v2M786 312v2M722 306v3M618 335v3M618 344v5M618 356v4M618 364v4M617 401v4M610 418v5M617 428v4M618 447v5M618 466v2M618 484v4M625 505v2M818 336v3M819 344v5M820 370v5M820 405v4M827 418v5M819 432v3M819 444v5M819 466v3M820 484v4M677 454v2M690 454v2M708 454v2M727 454v2M741 454v2M756 454v2M688 528v3M703 528v3M720 528v3M741 528v3M757 528v3M775 528v3M722 535v2M701 550v4M708 551v3M714 551v3M721 551v4"/>

                <!-- 图签 -->
                <path class="w" d="M707.500 564.500H866.500M707.500 564.500V594M720.500 564.500V577M813.500 564.500V594M831.500 564.500V577.500M708 577.500H866M708 581.500H760M708 586.500H760M708 590.500H760M813 571.500H866M813 577.500H866M831 582.500H866M813 586.500H866M725.500 577V594M745.500 577V594M760.500 577V594M778.500 577V594M784.500 582.500H795V585.500H784.500zM845.500 582V594M855.500 582V594"/>
                <path class="b" d="M729 566v5M733 566v5M737 566v5M741 566v5M745 566v5M749 566v5M753 566v5M757 566v5M761 566v5M765 566v5M769 566v5M773 566v5M818 567v3M821 567v3M835 567v3M839 567v3M843 567v3M711 579v2M716 579v2M711 584v2M714 584v2M712 588v2M748 579v2M751 579v2M817 581v4M821 581v4M816 589v4M820 589v4M823 589v4M834 584v2M840 584v2"/>
                <path class="d" d="M727 574H777M835 574H857"/>

                <!-- 坐标轴 -->
                <g shape-rendering="auto">
                    <rect x="264" y="640" width="5" height="22" fill="#17c21f"/>
                    <path d="M261.500 641L266.500 631.500L271.500 641z" fill="#17c21f"/>
                    <rect x="270" y="662" width="21" height="4" fill="#e0201a"/>
                    <path d="M290 658.500L299.500 664L290 669.500z" fill="#e0201a"/>
                    <circle cx="266" cy="664" r="4.500" fill="#1414a8"/>
                </g>
            </svg>

            <div class="cad-panel">
                <div class="cad-head"><strong><span class="m">CAD</span>命令</strong><span class="pin">⊣</span></div>
                <div class="cad-row"><svg class="ic"><use href="#map"/></svg>图纸分割</div>
                <div class="cad-row"><svg class="ic"><use href="#merge"/></svg>图纸合并</div>
                <div class="cad-row"><svg class="ic"><use href="#origin"/></svg>图纸原点</div>
                <div class="cad-row"><svg class="ic"><use href="#zero"/></svg>设置零点</div>
                <div class="cad-sep"></div>
                <div class="cad-row"><svg class="ic"><use href="#line"/></svg>绘制直线</div>
                <div class="cad-row"><svg class="ic"><use href="#arc"/></svg>绘制弧线</div>
                <div class="cad-row"><svg class="ic"><use href="#rectdraw"/></svg>绘制矩形</div>
                <div class="cad-sep"></div>
                <div class="cad-row"><svg class="ic"><use href="#replace"/></svg>替换文字</div>
                <div class="cad-row"><svg class="ic"><use href="#edittext"/></svg>修改文字</div>
                <div class="cad-row"><svg class="ic"><use href="#move"/></svg>移动文字</div>
                <div class="cad-row"><svg class="ic"><use href="#copydoc"/></svg>复制文字</div>
                <div class="cad-row"><svg class="ic"><use href="#textmerge"/></svg>文字合并</div>
                <div class="cad-sep"></div>
                <div class="cad-row"><svg class="ic"><use href="#delete"/></svg>删除图元</div>
                <div class="cad-row"><svg class="ic"><use href="#move"/></svg>移动图元</div>
                <div class="cad-row"><svg class="ic"><use href="#chain"/></svg>复制图元</div>
                <div class="cad-sep"></div>
                <div class="cad-row"><svg class="ic"><use href="#scale"/></svg>图纸比例</div>
                <div class="cad-row"><svg class="ic"><use href="#explode"/></svg>图块炸开</div>
                <div class="cad-sep"></div>
                <div class="cad-row"><svg class="ic"><use href="#bubble"/></svg>查询图元</div>
                <div class="cad-row"><svg class="ic"><use href="#bulb"/></svg>隐藏图层</div>
                <div class="cad-row"><svg class="ic"><use href="#layers"/></svg><span><span class="m">CAD</span>图层</span></div>
                <div class="cad-sep"></div>
                <div class="cad-row off"><svg class="ic"><use href="#undo"/></svg><span><span class="m">CAD</span>回退</span></div>
            </div>
        </div>
    </main>

    <footer class="status">
        <div class="st-msg">欢迎使用『量筋合一』<span class="m">CQS2013 Ver3.0-1780 :</span><span class="st-gap">学习版,无产品序列</span></div>
        <div class="st-floor">层高<span class="m">:3m;</span> 底标高<span class="m">:3m;</span> 首层</div>
        <div class="st-coord"><span class="m">x=98472696,y=1064325</span></div>
        <div class="st-cell">轴号</div>
        <div class="st-cell off">正交</div>
        <div class="st-cell">动态</div>
        <div class="st-cell">图纸</div>
        <div class="st-cell">捕捉</div>
        <div class="st-cell off">分层</div>
        <div class="st-cell">提示</div>
        <div class="st-cell">编号</div>
        <div class="st-icons">
            <i class="led"></i>
            <svg class="ic" viewBox="0 0 16 16"><rect x="1.500" y="2.500" width="13" height="11" fill="#e6eef8" stroke="#3a5a8a"/><rect x="1" y="2" width="14" height="3" fill="#3a5a8a"/><path d="M4 7h2M7 7h2M10 7h2M4 9h2M7 9h2M10 9h2M4 11h2M7 11h2M10 11h2" stroke="#3a5a8a"/></svg>
            <svg class="ic" viewBox="0 0 16 16"><path d="M4 2h8v5H4z" fill="#eee" stroke="#777"/><rect x="1" y="7" width="14" height="7" rx="1" fill="#e9b55a" stroke="#8a6a25"/><path d="M4 10h8" stroke="#8a6a25"/></svg>
            <svg class="ic" viewBox="0 0 16 16"><rect x="3.500" y="3.500" width="12" height="12" fill="#dbe8f6" stroke="#2f5f8f" stroke-width="1.200"/><path d="M0.500 11V.500H12" fill="none" stroke="#c03030" stroke-dasharray="1 1"/><path d="M1 1l4 4" stroke="#2f5f8f"/></svg>
        </div>
    </footer>
    <div class="taskbar-edge"></div>
</div>
</body>
</html>
```

FILE: styles.css
```css
* { box-sizing: border-box; }
html, body { margin: 0; height: 100%; overflow: hidden; }
body { font: 12px/16px "Noto Sans CJK SC", sans-serif; color: #17407f; background: #c4dbf5; }
i { display: block; font-style: normal; }
.defs { display: none; }
.m { font: 10px/16px "Liberation Mono", monospace; }
.ic { width: 16px; height: 16px; flex: none; display: block; }
.ic-big { width: 32px; height: 32px; flex: none; display: block; }
.num { fill: #fff; font: bold 11px "Liberation Sans", sans-serif; text-anchor: middle; }

.app { position: relative; width: 1024px; height: 740px; display: flex; flex-direction: column; overflow: hidden; }

/* 标题栏 */
.titlebar { height: 20px; display: flex; align-items: center; padding-left: 44px; border-bottom: 1px solid #23405f; background: linear-gradient(rgba(255,255,255,.16), rgba(0,0,0,.12)), linear-gradient(90deg, #a8c5e0 0, #86a8c9 6%, #5f83a8 22%, #234a74 27%, #2a5a8a 55%, #2f6292 80%, #3a6c9a 90%, #5583aa 100%); }
.qat { width: 164px; height: 20px; display: flex; align-items: center; gap: 6px; padding-left: 8px; border-radius: 0 10px 10px 0; background: linear-gradient(#8ea2b8, #7a92ad); }
.qat-undo { margin-left: 2px; }
.qat-arrow { width: 8px; color: #c9d9ea; font-size: 9px; line-height: 12px; }
.qat-more { margin-left: 10px; color: #b8cde2; font-size: 10px; }
.title-text { position: absolute; left: 281px; top: 1px; line-height: 18px; letter-spacing: -.12px; font-family: "Open Sans", "Noto Sans CJK SC", sans-serif; color: #101a28; white-space: nowrap; text-shadow: 0 0 4px #c9dcef, 0 0 6px #c9dcef; }
.win-btns { margin-left: auto; margin-right: 2px; display: flex; height: 18px; align-self: flex-start; border: 1px solid #dbe6f0; border-top: 0; border-radius: 0 0 4px 4px; overflow: hidden; }
.win-btn { display: flex; align-items: center; justify-content: center; color: #fff; font: bold 13px "Liberation Sans", sans-serif; background: linear-gradient(#8eaac6, #557a9f); }
.win-min { width: 28px; border-right: 1px solid #dbe6f0; }
.win-max { width: 26px; border-right: 1px solid #dbe6f0; }
.win-close { width: 48px; background: linear-gradient(#e0a098, #b03a2c); }
.min-bar { width: 10px; height: 3px; margin-top: 4px; background: #fff; }
.max-box { width: 10px; height: 10px; border: 2px solid #fff; }
.logo { position: absolute; left: 2px; top: 0; width: 42px; height: 42px; }

/* 选项卡行 */
.tabrow { height: 22px; display: flex; align-items: flex-end; background: linear-gradient(#b9d3f0, #c6dcf6); overflow: hidden; }
.ribbon-tab { flex: none; width: 148px; height: 19px; margin-left: 49px; padding-left: 18px; line-height: 18px; white-space: nowrap; border: 1px solid #a9c3e0; border-bottom: 0; border-radius: 3px 3px 0 0; background: linear-gradient(#eef5fd, #cfe1f6); }
.quick { margin-left: 414px; padding-left: 7px; height: 22px; width: 420px; flex: none; display: flex; align-items: center; gap: 6px; white-space: nowrap; background: linear-gradient(90deg, rgba(222,234,248,0), #dbe8f8 5%); color: #17407f; }
.quick-item { display: flex; align-items: center; gap: 4px; }
.quick-item.wide { margin-left: 3px; }
.vsep { width: 1px; height: 16px; background: #9fb9d8; flex: none; }
.vsep.far { margin-left: 3px; }

/* 功能区 */
.ribbon { height: 90px; display: flex; gap: 4px; padding: 1px 0 0 4px; background: #c4dbf5; border-bottom: 1px solid #8ca8c8; }
.group { height: 85px; display: flex; flex-direction: column; flex: none; border: 1px solid #a7c3e5; border-radius: 3px; background: linear-gradient(#dce9f9, #c9ddf5); }
.g1 { width: 111px; }
.g2 { width: 109px; }
.g3 { width: 352px; }
.g4 { width: 118px; }
.g5 { width: 102px; }
.g6 { width: 125px; }
.g7 { width: 59px; }
.group-body { flex: 1; display: flex; min-height: 0; }
.group-label { position: relative; height: 15px; line-height: 15px; text-align: center; color: #4a79ad; background: #b9d3ef; }
.launcher { position: absolute; right: 3px; top: 4px; width: 7px; height: 7px; border: 1px solid #6f8fb5; background: #dbe7f5; }
.big { width: 52px; flex: none; display: flex; flex-direction: column; align-items: center; padding-top: 4px; line-height: 18px; }
.big.select { width: 44px; }
.g1 .big { margin-left: 1px; }
.g2 .big { margin-left: 2px; width: 50px; }
.drop { width: 0; height: 0; border: 3px solid transparent; border-top: 3px solid #5a6f88; border-bottom: 0; }
.big .drop { margin-top: 1px; }
.small-col { display: grid; grid-auto-rows: 22px; padding-top: 1px; margin-left: 6px; }
.small { display: flex; align-items: center; gap: 3px; white-space: nowrap; }
.g4 .small-col:first-child { margin-left: 7px; }
.g4 .small-col + .small-col { margin-left: 8px; }
.rows { display: flex; flex-direction: column; gap: 7px; padding-top: 9px; margin-left: 5px; }
.g5 .rows, .g6 .rows { margin-left: 4px; }
.row { display: flex; gap: 4px; height: 22px; }
.btns { height: 22px; display: flex; align-items: center; border: 1px solid #a7c3e5; border-radius: 3px; background: linear-gradient(#e8f1fb, #cfe0f4); white-space: nowrap; }
.tool { height: 20px; display: flex; align-items: center; gap: 2px; padding: 0 2px; }
.tool.icon-only { padding: 0 3.500px; }
.tool.square { width: 23px; justify-content: center; padding: 0; }
.tool.active { background: linear-gradient(#fde7b4, #f8cb78); outline: 1px solid #d9a84e; outline-offset: -1px; }
.combo { width: 46px; height: 22px; display: flex; align-items: center; justify-content: space-between; padding: 0 6px 0 2px; border-radius: 2px; color: #222; font-family: "Liberation Sans", sans-serif; background: #fff; border: 1px solid #c8daf0; }
.icon-grid { display: grid; grid-template-columns: 17px 17px; column-gap: 10px; grid-auto-rows: 22px; align-items: center; padding: 1px 0 0 5px; }

/* 主体 */
.main { height: 586px; display: flex; }
.side { width: 210px; display: flex; flex-direction: column; background: #c4dbf5; }
.side-tabs { height: 19px; display: flex; gap: 3px; padding-left: 8px; align-items: flex-end; }
.side-tab { padding: 0 6px; height: 18px; line-height: 17px; color: #17407f; background: linear-gradient(#e5eefa, #bcd5f2); border-radius: 6px 6px 0 0; white-space: nowrap; }
.side-tab:first-child { padding: 0 4px; }
.side-tab.on { background: linear-gradient(#fff, #eaf2fc); }
.side-tools { height: 24px; display: flex; align-items: center; padding-left: 8px; gap: 7px; background: linear-gradient(#f1f6fc, #c9dcf3); border-bottom: 1px solid #8ca8c8; }
.side-tools .vsep { height: 20px; margin-left: 4px; }
.side-tools .vsep.close { margin-left: -1px; }
.side-tool { display: flex; align-items: center; gap: 2px; white-space: nowrap; }
.side-tool .m { color: #17407f; }
.side-tool.spaced { margin-left: 3px; }
.tree { flex: 1; min-height: 0; margin: 0 1px; display: flex; flex-direction: column; background: #fff; border: 1px solid #8ca8c8; border-top: 0; color: #111; }
.tree-list { flex: 1; padding-top: 1px; }
.node { height: 16px; display: flex; align-items: center; white-space: nowrap; }
.node .m { color: #111; }
.root { padding-left: 2px; gap: 4px; }
.lv1 { padding-left: 11px; }
.lv2 { padding-left: 29px; }
.label { margin-left: 3px; padding: 0 1px; height: 16px; }
.selected { background: #3399ff; color: #fff; margin-left: 2px; padding: 0 2px; }
.selected .m { color: #fff; }
.branch { width: 11px; height: 16px; flex: none; align-self: flex-start; border-left: 1px dotted #666; background: repeating-linear-gradient(90deg, #666 0 1px, transparent 1px 2px) 0 8px / 100% 1px no-repeat; }
.branch.last { height: 9px; }
.minus { width: 9px; height: 9px; margin-left: -4px; margin-right: 6px; border: 1px solid #8a8a8a; background: linear-gradient(#a0a0a0, #a0a0a0) center / 5px 1px no-repeat, #f5f5f5; }
.hscroll { height: 15px; display: flex; align-items: center; justify-content: space-between; padding: 0 5px; background: #f0f2f5; color: #444; font-size: 10px; }
.sb-arrow { width: 10px; text-align: center; }
.sb-thumb { width: 154px; height: 14px; line-height: 13px; text-align: center; font: 9px/13px "Liberation Sans", sans-serif; color: #556; border: 1px solid #9aa5b3; border-radius: 2px; background: linear-gradient(#f4f5f7, #c9ced6); }
.splitter { width: 6px; display: flex; align-items: center; justify-content: center; background: linear-gradient(90deg, #c4dbf5, #dfeafa); border-right: 1px solid #8ca8c8; }
.grip { width: 3px; height: 32px; background: repeating-linear-gradient(#7f9fc4 0 2px, transparent 2px 4px); }

/* 绘图区 */
.canvas { position: relative; flex: 1; background: #000; overflow: hidden; }
.drawing { display: block; width: 808px; height: 586px; }
.w, .g, .gt, .y, .c, .cd, .d, .b, .dash, .ring { fill: none; }
.w { stroke: #fff; }
.g { stroke: #4cc055; filter: drop-shadow(0 0 1px #2f8a3a); }
.gt { stroke: #45b54e; stroke-width: 3; }
.y { stroke: #d8d26a; }
.c { stroke: #2fd8e0; stroke-width: 3; }
.cd { stroke: #1c6f8a; stroke-width: 2; }
.d { stroke: #8a8a8a; }
.b { stroke: #fff; stroke-width: 3; }
.dash { stroke: #c6d4d8; stroke-dasharray: 8 8; }
.ring { stroke: #fff; }

.cad-panel { position: absolute; left: 703px; top: 19px; width: 85px; height: 503px; padding: 3px 4px 0; border: 1px solid #8fa9c8; background: linear-gradient(90deg, #f4f8fd, #dce9fa 50%, #b9d3f5); box-shadow: inset 0 0 0 2px #dbe7f6; }
.cad-head { height: 20px; display: flex; align-items: center; justify-content: space-between; padding: 0 3px; margin-bottom: 2px; background: #b8cde9; color: #14307a; }
.cad-head .m { font-weight: bold; color: #14307a; }
.pin { color: #5a7fb0; font-size: 10px; }
.cad-row { height: 21px; display: flex; align-items: center; gap: 3px; padding-left: 2px; white-space: nowrap; color: #1c3f7a; }
.cad-row .m { color: #1c3f7a; }
.cad-row.off, .cad-row.off .m { color: #9aa3ae; }
.cad-sep { height: 3px; margin: 0 12px 0 15px; border-top: 1px solid #a8bcd6; }

/* 状态栏 */
.status { height: 20px; display: flex; align-items: center; white-space: nowrap; color: #17407f; border-top: 1px solid #e6eff9; background: linear-gradient(#dbe8f8, #bcd3ee); }
.status .m { color: #17407f; }
.st-msg { width: 356px; flex: none; padding-left: 2px; overflow: hidden; border-right: 1px solid #eef4fb; }
.st-gap { margin-left: 10px; }
.st-floor { width: 206px; flex: none; padding-left: 3px; word-spacing: 4px; }
.st-coord { width: 126px; flex: none; height: 20px; padding-left: 3px; border-left: 1px solid #a9c3e0; }
.st-cell { width: 31px; flex: none; height: 20px; text-align: center; line-height: 20px; color: #111; border-left: 1px solid #a9c3e0; }
.st-cell.off { color: #a4aeb9; }
.st-icons { flex: 1; display: flex; align-items: center; gap: 8px; padding-left: 2px; }
.led { width: 10px; height: 10px; margin-left: 2px; border-radius: 50%; background: #12c43a; }
.taskbar-edge { height: 2px; background: linear-gradient(90deg, #5f87a8, #8aa8c4 45%, #5a7a98); }
```
